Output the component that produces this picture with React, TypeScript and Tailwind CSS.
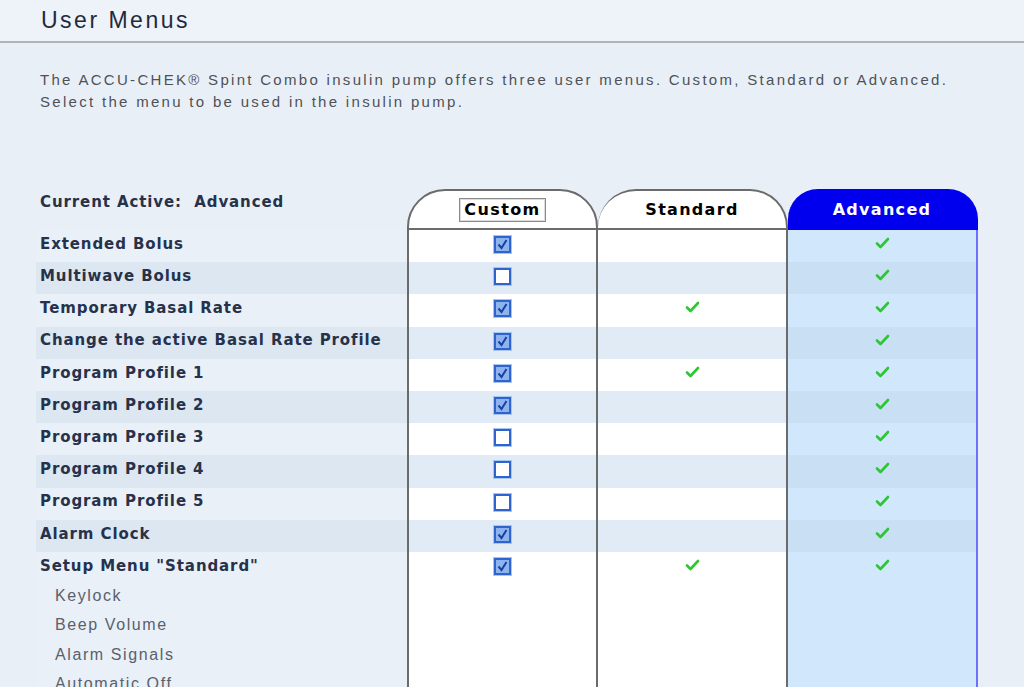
import React from 'react';

type Row = { label: string; custom: boolean; standard: boolean; advanced: boolean };

const ROWS: Row[] = [
  { label: 'Extended Bolus', custom: true, standard: false, advanced: true },
  { label: 'Multiwave Bolus', custom: false, standard: false, advanced: true },
  { label: 'Temporary Basal Rate', custom: true, standard: true, advanced: true },
  { label: 'Change the active Basal Rate Profile', custom: true, standard: false, advanced: true },
  { label: 'Program Profile 1', custom: true, standard: true, advanced: true },
  { label: 'Program Profile 2', custom: true, standard: false, advanced: true },
  { label: 'Program Profile 3', custom: false, standard: false, advanced: true },
  { label: 'Program Profile 4', custom: false, standard: false, advanced: true },
  { label: 'Program Profile 5', custom: false, standard: false, advanced: true },
  { label: 'Alarm Clock', custom: true, standard: false, advanced: true },
  { label: 'Setup Menu "Standard"', custom: true, standard: true, advanced: true },
];

const SUB_ITEMS = ['Keylock', 'Beep Volume', 'Alarm Signals', 'Automatic Off'];

function GreenCheck() {
  return (
    <svg width="15" height="12" viewBox="0 0 15 12" className="block">
      <path d="M2 6.5 L5.5 10 L13 2" fill="none" stroke="#2fc633" strokeWidth="2.6" strokeLinecap="round" strokeLinejoin="round" />
    </svg>
  );
}

function Box({ checked }: { checked: boolean }) {
  return (
    <div
      className={`flex h-[17px] w-[17px] items-center justify-center border-2 border-[#2f64cf] shadow-[0_0_0_1px_#a9c5ef] ${
        checked ? 'bg-[#8db4ec]' : 'bg-white'
      }`}
    >
      {checked ? (
        <svg width="11" height="11" viewBox="0 0 11 11" className="block">
          <path d="M1.5 5.5 L4.5 9 L9.5 1" fill="none" stroke="#1b3fa8" strokeWidth="2" />
        </svg>
      ) : null}
    </div>
  );
}

const sans = 'font-["Liberation_Sans",Arial,sans-serif]';
const wide = 'font-["DejaVu_Sans",Verdana,sans-serif]';

export default function App() {
  return (
    <div className={`h-[687px] w-[1024px] overflow-hidden bg-[#e9eff7] ${sans}`}>
      <div className="flex h-[43px] items-center border-b-2 border-[#b3b3b3] bg-[#eef2f9] px-[41px]">
        <h1 className="text-[23px] tracking-[2.5px] text-[#1f2a3d]">User Menus</h1>
      </div>

      <p className="mt-[26px] px-[40px] text-[15px] leading-[22px] tracking-[2.3px] text-[#4e5258]">
        The ACCU-CHEK® Spint Combo insulin pump offers three user menus. Custom, Standard or Advanced.
        <br />
        Select the menu to be used in the insulin pump.
      </p>

      <div className={`mt-[76px] pl-[36px] ${wide}`}>
        {/* header */}
        <div className="flex h-[41px]">
          <div className="w-[371px] pl-[4px] pt-[2px] text-[15px] font-bold tracking-[0.9px] text-[#27324a]">
            Current Active:&nbsp; Advanced
          </div>
          <div className="flex h-[41px] w-[191px] items-center justify-center rounded-t-[38px] border-2 border-b-2 border-[#6b6b6b] bg-white">
            <span className="border border-[#8a8a8a] px-[4px] text-[16px] font-bold leading-[22px] tracking-[1.4px] text-black shadow-[inset_0_0_0_1px_#dcdcdc]">
              Custom
            </span>
          </div>
          <div className="flex h-[41px] w-[190px] items-center justify-center rounded-t-[38px] border-2 border-l-0 border-[#6b6b6b] bg-white">
            <span className="text-[16px] font-bold tracking-[1.3px] text-black">Standard</span>
          </div>
          <div className="flex h-[41px] w-[190px] items-center justify-center rounded-t-[30px] border-2 border-l-0 border-[#0000ee] bg-[#0000ee]">
            <span className="text-[16px] font-bold tracking-[1.3px] text-white">Advanced</span>
          </div>
        </div>

        {ROWS.map((row, i) => {
          const striped = i % 2 === 1;
          return (
            <div key={row.label} className="flex h-[32.2px]">
              <div
                className={`flex w-[371px] items-center pb-[4px] pl-[4px] text-[15px] font-bold tracking-[0.9px] text-[#27324a] ${
                  striped ? 'bg-[#dce7f2]' : 'bg-[#e9f0f8]'
                }`}
              >
                {row.label}
              </div>
              <div
                className={`flex w-[191px] justify-center border-x-2 border-[#6b6b6b] pt-[6px] ${
                  striped ? 'bg-[#e0ebf5]' : 'bg-white'
                }`}
              >
                <Box checked={row.custom} />
              </div>
              <div
                className={`flex w-[190px] justify-center border-r-2 border-[#6b6b6b] pt-[7px] ${
                  striped ? 'bg-[#e0ebf5]' : 'bg-white'
                }`}
              >
                {row.standard ? <GreenCheck /> : null}
              </div>
              <div
                className={`flex w-[190px] justify-center border-r-2 border-[#6f6fff] pt-[7px] ${
                  striped ? 'bg-[#c8dff4]' : 'bg-[#d1e8fc]'
                }`}
              >
                {row.advanced ? <GreenCheck /> : null}
              </div>
            </div>
          );
        })}

        {SUB_ITEMS.map((item) => (
          <div key={item} className="flex h-[29.5px]">
            <div className={`flex w-[371px] items-center bg-[#e9f0f8] pb-[6px] pl-[19px] text-[16px] tracking-[1.6px] text-[#5a606c] ${sans}`}>
              {item}
            </div>
            <div className="w-[191px] border-x-2 border-[#6b6b6b] bg-white" />
            <div className="w-[190px] border-r-2 border-[#6b6b6b] bg-white" />
            <div className="w-[190px] border-r-2 border-[#6f6fff] bg-[#d1e8fc]" />
          </div>
        ))}
      </div>
    </div>
  );
}
